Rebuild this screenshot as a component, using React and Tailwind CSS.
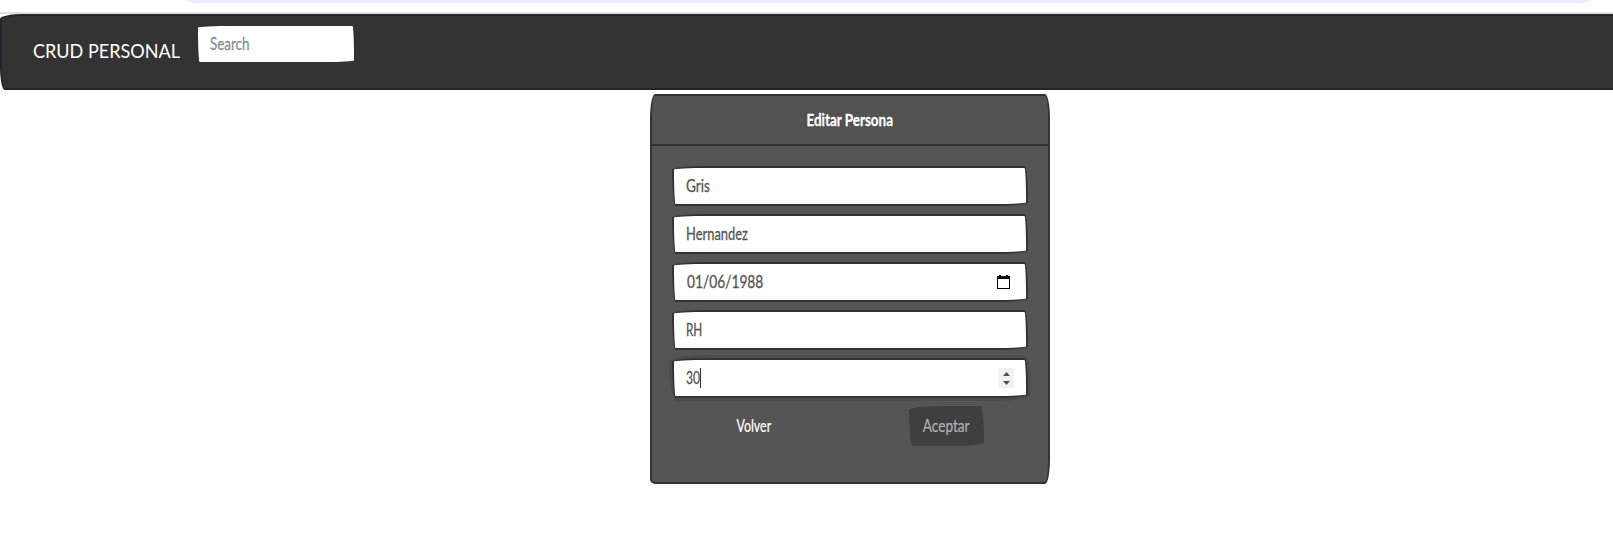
import React from "react";

const sketch = "rounded-[255px_25px_225px_25px/25px_225px_25px_255px]";

function Label({ children, className = "" }) {
  return <span className={`inline-block whitespace-pre leading-6 ${className}`}>{children}</span>;
}

function Field({ children, text, focused = false, className = "origin-left scale-x-[0.77]" }) {
  return (
    <div
      className={`flex h-10 items-center justify-between border-2 border-[#333] bg-white pr-3 pl-3 text-[17px] text-[#555] ${sketch} ${
        focused ? "shadow-[0_0_0_3px_rgba(51,51,51,0.25)]" : ""
      }`}
    >
      <Label className={`[-webkit-text-stroke:0.3px_#555] ${className}`}>{text}</Label>
      {children}
    </div>
  );
}

export default function App() {
  return (
    <div className="h-[543px] overflow-hidden bg-white font-['Lato',sans-serif]">
      <div className="h-3 pl-[185px]">
        <div className="h-[3px] w-[1406px] rounded-b-[12px_3px] bg-[#e9eef8]" />
      </div>
      <div className="h-0.5 bg-[#dfdfdf]" />
      <nav className="flex h-[76px] w-[1680px] items-start rounded-[25px_25px_55px_5px/5px_55px_25px_25px] border-2 border-[#212529] bg-[#333] pl-[31px]">
        <div className="w-[163px] pt-[21px] text-[19px] text-white">
          <Label className="origin-left scale-x-[0.95]">CRUD PERSONAL</Label>
        </div>
        <div className={`mt-2 flex h-10 w-40 items-center border-2 border-[#333] bg-white pl-3 text-[17px] text-[#868e96] ${sketch}`}>
          <Label className="origin-left scale-x-[0.79] [-webkit-text-stroke:0.3px_#868e96]">Search</Label>
        </div>
      </nav>
      <main className="ml-[650px] mt-1 h-[390px] w-[400px] overflow-hidden rounded-[5px_5px_5px_5px/25px_25px_25px_5px] border-2 border-[#333] bg-[#555]">
        <header className="flex h-[50px] items-center justify-center border-b-2 border-[#333] bg-[#525252] text-[17px] font-bold text-white">
          <Label className="scale-x-[0.79] [-webkit-text-stroke:0.3px_#fff]">Editar Persona</Label>
        </header>
        <div className="flex flex-col gap-2 px-5 pt-5">
          <Field text="Gris" className="origin-left scale-x-[0.8]" />
          <Field text="Hernandez" className="origin-left scale-x-[0.76]" />
          <Field text="01/06/1988" className="ml-px origin-left scale-x-[0.81]">
            <svg className="mr-1 h-[15px] w-[13px]" viewBox="0 0 13 15" shapeRendering="crispEdges">
              <path d="M2 0h2v1h5V0h2v1h2v13H0V1h2zM1 4v9h11V4z" fill="#000" fillRule="evenodd" />
            </svg>
          </Field>
          <Field text="RH" className="origin-left scale-x-[0.69]" />
          <Field
            focused
            text={<span className="inline-block origin-left scale-x-[0.71]">30</span>}
            className="relative after:absolute after:left-[14px] after:top-[2px] after:h-5 after:w-px after:bg-[#333] after:content-['']"
          >
            <svg className="h-5 w-[15px]" viewBox="0 0 15 20">
              <path d="M0 0h15v20H0z" fill="#f0f0f0" />
              <path d="M4 8l3.5-4L11 8zM4 13h7l-3.5 4z" fill="#505050" />
            </svg>
          </Field>
          <div className="flex h-10 text-[17px]">
            <div className="flex w-[163px] items-center justify-center text-white">
              <Label className="scale-x-[0.73] [-webkit-text-stroke:0.2px_#fff]">Volver</Label>
            </div>
            <div className={`ml-[74px] flex w-[75px] items-center justify-center bg-[#3f3f3f] text-[#b2b2b2] ${sketch}`}>
              <Label className="scale-x-[0.8] [-webkit-text-stroke:0.2px_#b2b2b2]">Aceptar</Label>
            </div>
          </div>
        </div>
      </main>
    </div>
  );
}
